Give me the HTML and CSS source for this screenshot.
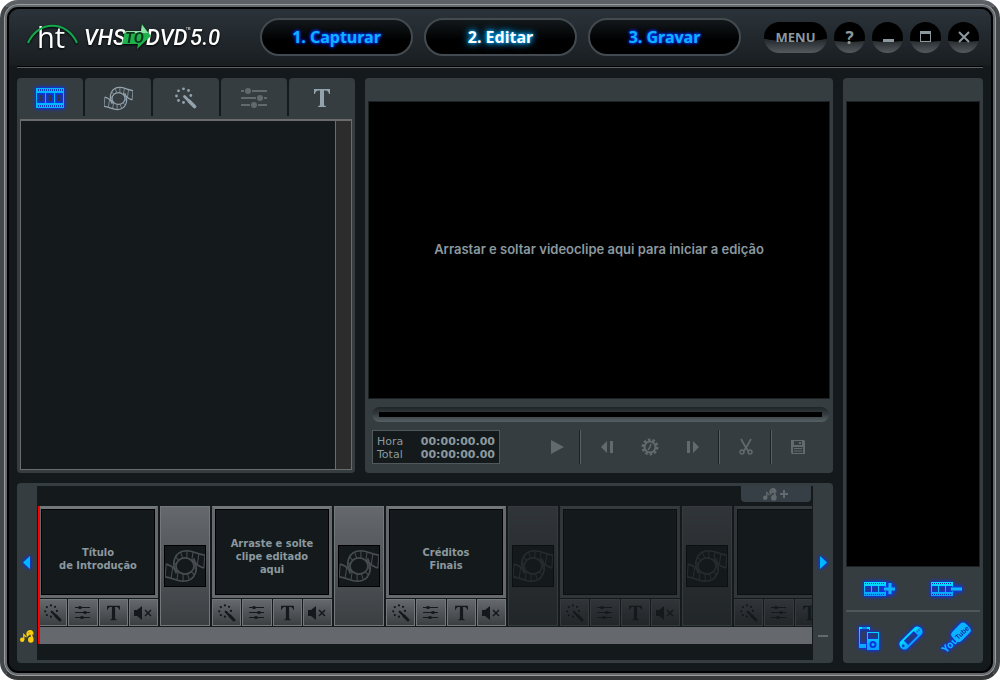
FILE: index.html
```html
<!DOCTYPE html>
<html lang="pt">
<head>
<meta charset="utf-8">
<title>VHS to DVD 5.0</title>
<link rel="stylesheet" href="styles.css">
</head>
<body>
<svg class="defs" aria-hidden="true">
  <linearGradient id="sky" x1="0" y1="0" x2="0" y2="1"><stop offset="0" stop-color="#00e4ff"/><stop offset="1" stop-color="#0a9cff"/></linearGradient>
  <symbol id="film" viewBox="0 0 28 20">
    <path fill="currentColor" fill-rule="evenodd" d="M0 0H28V20H0ZM1 5V15H9V5ZM10 5V15H18V5ZM19 5V15H27V5Z"/>
    <path class="holes" stroke-width="2" stroke-dasharray="1 1" d="M2 2H27M2 18H27"/>
    <path class="dim" stroke-width="3" d="M5 7V13M14 7V13M23 7V13"/>
  </symbol>
  <symbol id="reel" viewBox="0 0 42 42">
    <g fill="none" stroke="currentColor" stroke-width="1.8">
      <ellipse cx="21" cy="21" rx="9.5" ry="8.5"/>
      <g id="arm">
        <path d="M12 29C6 18 10 5 23 5C30 5 34 9 42 9.500M28 14.500C32 18 35 22 41 23"/>
        <path stroke-width="1.100" d="M41.800 9.500L40.800 23M9.500 18L12.500 20M11 11.500L14.500 15M16.500 7L18.500 12.500M23 5V12.500M29.500 6.500L28 15.500M35.500 8.500L34 19"/>
      </g>
      <use href="#arm" transform="rotate(180 21 21)"/>
    </g>
  </symbol>
  <symbol id="wand" viewBox="0 0 22 22">
    <path stroke="currentColor" stroke-width="3.600" stroke-linecap="round" d="M14.500 14.500L19.500 19.500"/>
    <path stroke="currentColor" stroke-width="2.800" stroke-linecap="round" d="M9.500 9.500L15 15"/>
    <g fill="currentColor"><circle cx="8.500" cy="1.800" r="1.400"/><circle cx="13.500" cy="3.500" r="1.400"/><circle cx="3.500" cy="3.800" r="1.400"/><circle cx="1.500" cy="9" r="1.400"/><circle cx="15.800" cy="8.500" r="1.400"/><circle cx="3.500" cy="13.500" r="1.400"/><circle cx="8.500" cy="15.500" r="1.400"/></g>
  </symbol>
  <symbol id="sliders" viewBox="0 0 26 20">
    <path stroke="currentColor" stroke-width="2" d="M0 3H26M0 10H26M0 17H26"/>
    <path class="gap" stroke-width="3" d="M3 3H11M15 10H23M9 17H17"/>
    <g fill="currentColor"><circle cx="7" cy="3" r="3"/><circle cx="19" cy="10" r="3"/><circle cx="13" cy="17" r="3"/></g>
  </symbol>
  <symbol id="mini-sliders" viewBox="0 0 15 13">
    <path stroke="currentColor" d="M0 1.500H15M0 6.500H15M0 11.500H15"/>
    <g fill="currentColor"><ellipse cx="5" cy="1.500" rx="2" ry="1.500"/><ellipse cx="10" cy="6.500" rx="2" ry="1.500"/><ellipse cx="7" cy="11.500" rx="2" ry="1.500"/></g>
  </symbol>
  <symbol id="mute" viewBox="0 0 18 14">
    <path fill="currentColor" d="M0 4H3L8 0V14L3 10H0Z"/>
    <path stroke="currentColor" stroke-width="1.500" d="M11 4L17 10M17 4L11 10"/>
  </symbol>
  <symbol id="notes" viewBox="0 0 14 13">
    <g fill="currentColor"><circle cx="2.200" cy="9.800" r="2.200"/><path d="M3.200 9.500V3L7 7L6 7.500L4.400 6V9.500Z"/><ellipse cx="10.800" cy="9.800" rx="2.800" ry="3"/></g>
    <path fill="none" stroke="currentColor" stroke-width="1.800" d="M12.700 9L10.500 2.500L7.500 5.500C6.500 3 8 0.900 10 0.900C12 0.900 13 2.500 12.500 4.500"/>
  </symbol>
  <symbol id="tools-t" viewBox="0 0 18 20">
    <path fill="currentColor" d="M1 1H17V6H16C15.500 3 14 2.500 11 2.500V16C11 18 12 18 13 18.200V19H5V18.200C6 18 7 18 7 16V2.500C4 2.500 2.500 3 2 6H1Z"/>
  </symbol>
</svg>

<div class="window">
  <header class="titlebar">
    <svg class="logo" viewBox="0 0 198 34" role="img" aria-label="ht VHS to DVD 5.0">
      <text class="logo-ht" x="10" y="28">ht</text>
      <path d="M1 23C11 0 40 0 50 23" fill="none" stroke="#12a84b" stroke-width="2"/>
      <text class="logo-name" x="57" y="25">VHS</text>
      <text class="logo-name" x="119" y="25">DVD</text>
      <path d="M98 11H114L115 4L124 16L110 29L111 24H95Z" fill="#1fb14c"/>
      <path d="M99 11H114L115 5L121 13H98Z" fill="#8fe0a4"/>
      <text class="logo-to" x="98" y="23">TO</text>
      <text class="logo-tm" x="159" y="10">TM</text>
      <text class="logo-name" x="163" y="25">5.0</text>
    </svg>
    <nav class="steps">
      <button class="step">1. Capturar</button>
      <button class="step active">2. Editar</button>
      <button class="step">3. Gravar</button>
    </nav>
    <div class="system">
      <button class="sys menu">MENU</button>
      <button class="sys help" aria-label="Ajuda">?</button>
      <button class="sys" aria-label="Minimizar"><svg width="12" height="14"><path fill="#8b999f" d="M1 9H12V12H1Z"/></svg></button>
      <button class="sys" aria-label="Maximizar"><svg width="12" height="12"><path fill="#8b999f" fill-rule="evenodd" d="M0 0H11V11H0ZM1 3V10H10V3Z"/></svg></button>
      <button class="sys" aria-label="Fechar"><svg width="12" height="12"><path stroke="#8b999f" stroke-width="2" d="M1 1L11 11M11 1L1 11"/></svg></button>
    </div>
  </header>

  <main class="workspace">
    <section class="panel library">
      <div class="tabs">
        <button class="tab lit" aria-label="Vídeos"><svg width="28" height="20"><use href="#film"/></svg></button>
        <button class="tab" aria-label="Transições"><svg width="29" height="29"><use href="#reel"/></svg></button>
        <button class="tab" aria-label="Efeitos"><svg width="22" height="22"><use href="#wand"/></svg></button>
        <button class="tab off" aria-label="Ajustes"><svg width="26" height="20"><use href="#sliders"/></svg></button>
        <button class="tab" aria-label="Texto"><svg width="18" height="20"><use href="#tools-t"/></svg></button>
      </div>
      <div class="bin"><div class="scrollbar"></div></div>
    </section>

    <section class="panel preview">
      <div class="screen">Arrastar e soltar videoclipe aqui para iniciar a edição</div>
      <div class="seek"><div class="seek-track"></div></div>
      <div class="controls">
        <dl class="time">
          <dt>Hora</dt><dd>00:00:00.00</dd>
          <dt>Total</dt><dd>00:00:00.00</dd>
        </dl>
        <div class="group play"><button class="ctl" aria-label="Reproduzir"><svg width="14" height="14"><path fill="#63696c" d="M1 0L14 7L1 14Z"/></svg></button></div>
        <div class="group steps3">
          <button class="ctl" aria-label="Quadro anterior"><svg width="14" height="14"><path fill="#63696c" d="M7 1V13L1 7ZM10 1H13V13H10Z"/></svg></button>
          <button class="ctl" aria-label="Configurações"><svg width="18" height="18" viewBox="-9 -9 18 18"><circle r="5.500" fill="none" stroke="#63696c" stroke-width="2"/><circle r="7.200" fill="none" stroke="#63696c" stroke-width="2.600" stroke-dasharray="2.520 2" /><path d="M1 -3L0 0L-2 3" fill="none" stroke="#63696c" stroke-width="1.500"/></svg></button>
          <button class="ctl" aria-label="Próximo quadro"><svg width="14" height="14"><path fill="#63696c" d="M7 1V13L13 7ZM1 1H4V13H1Z"/></svg></button>
        </div>
        <div class="group single"><button class="ctl" aria-label="Cortar"><svg width="14" height="16" fill="none" stroke="#63696c"><path stroke-width="1.700" d="M2 0L6.500 8L10 13M12 0L7.500 8L4 13"/><circle cx="3" cy="13" r="2" stroke-width="1.400"/><circle cx="11" cy="13" r="2" stroke-width="1.400"/></svg></button></div>
        <div class="group single"><button class="ctl" aria-label="Salvar"><svg width="14" height="14"><path fill="#63696c" fill-rule="evenodd" d="M0 0H13L14 1V14H1L0 13ZM3 1V5H11V1ZM2 7V13H12V7ZM8 2H10V4H8ZM3 8H11V9H3ZM3 10.500H11V11.500H3Z"/></svg></button></div>
      </div>
    </section>

    <aside class="panel output">
      <div class="queue"></div>
      <div class="row clips-row">
        <button class="glow" aria-label="Adicionar clipe"><svg width="34" height="16"><path fill="url(#sky)" fill-rule="evenodd" d="M1 1H23V15H1ZM2 5V11H8V5ZM9 5V11H15V5ZM16 5V11H22V5Z"/><path stroke="#12339f" stroke-dasharray="1 1" d="M2 2.500H22M2 13.500H22"/><path stroke="#1444bb" stroke-width="5" d="M20 8H32M27 2V14"/><path stroke="#0cb4ff" stroke-width="3" d="M21 8H32M27 2V13"/></svg></button>
        <button class="glow" aria-label="Remover clipe"><svg width="34" height="16"><path fill="url(#sky)" fill-rule="evenodd" d="M1 1H23V15H1ZM2 5V11H8V5ZM9 5V11H15V5ZM16 5V11H22V5Z"/><path stroke="#12339f" stroke-dasharray="1 1" d="M2 2.500H22M2 13.500H22"/><path stroke="#1444bb" stroke-width="5" d="M20 8H32"/><path stroke="#0cb4ff" stroke-width="3" d="M21 8H32"/></svg></button>
      </div>
      <div class="row export-row">
        <button class="glow" aria-label="Dispositivos Apple"><svg width="22" height="24"><path fill="url(#sky)" fill-rule="evenodd" d="M1 1H12V4H11V3H2V18H8V22H1ZM9 6H21V24H9ZM10 7V13H20V7ZM15 15A3.500 3.500 0 1 0 15 22A3.500 3.500 0 1 0 15 15Z"/><circle cx="15" cy="18.500" r="1.500" fill="#0cb4ff"/><path stroke="#1444bb" d="M4 2H9"/></svg></button>
        <button class="glow" aria-label="Console portátil"><svg width="26" height="26"><g transform="rotate(-45 13 13)"><path fill="url(#sky)" fill-rule="evenodd" d="M3 8H23A4 5 0 0 1 23 18H3A4 5 0 0 1 3 8ZM6 10V16H20V10Z"/><circle cx="2" cy="13" r="1.500" fill="#1444bb"/><path stroke="#1444bb" stroke-dasharray="1 1" stroke-width="2" d="M21.500 13H26"/></g></svg></button>
        <button class="glow" aria-label="YouTube"><svg width="30" height="28"><g transform="rotate(-45 15 14)"><rect x="13" y="7" width="19" height="13" rx="4" fill="#0cb4ff"/><text class="yt-you" x="-3" y="18">You</text><text class="yt-tube" x="15" y="17">Tube</text></g></svg></button>
      </div>
    </aside>

    <section class="panel timeline">
      <div class="rail">
        <button class="glow arrow" aria-label="Rolar para a esquerda"><svg width="8" height="13"><path fill="#00b8ff" d="M7 0V13L0 6.500Z"/></svg></button>
        <svg class="gold" width="14" height="13"><use href="#notes"/></svg>
      </div>
      <div class="track">
        <button class="add-audio" aria-label="Adicionar áudio"><svg width="14" height="13"><use href="#notes"/></svg><svg width="10" height="10"><path stroke="currentColor" stroke-width="2" d="M5 1V9M1 5H9"/></svg></button>
        <div class="strip">
          <article class="clip"><div class="thumb">Título<br>de Introdução</div><div class="tools"><button aria-label="Efeitos"><svg width="18" height="18"><use href="#wand"/></svg></button><button aria-label="Ajustes"><svg width="15" height="13"><use href="#mini-sliders"/></svg></button><button aria-label="Texto"><svg width="15" height="16"><use href="#tools-t"/></svg></button><button aria-label="Mudo"><svg width="18" height="14"><use href="#mute"/></svg></button></div></article>
          <button class="transition" aria-label="Transição"><svg width="42" height="42"><use href="#reel"/></svg></button>
          <article class="clip"><div class="thumb tall">Arraste e solte<br>clipe editado<br>aqui</div><div class="tools"><button aria-label="Efeitos"><svg width="18" height="18"><use href="#wand"/></svg></button><button aria-label="Ajustes"><svg width="15" height="13"><use href="#mini-sliders"/></svg></button><button aria-label="Texto"><svg width="15" height="16"><use href="#tools-t"/></svg></button><button aria-label="Mudo"><svg width="18" height="14"><use href="#mute"/></svg></button></div></article>
          <button class="transition" aria-label="Transição"><svg width="42" height="42"><use href="#reel"/></svg></button>
          <article class="clip"><div class="thumb">Créditos<br>Finais</div><div class="tools"><button aria-label="Efeitos"><svg width="18" height="18"><use href="#wand"/></svg></button><button aria-label="Ajustes"><svg width="15" height="13"><use href="#mini-sliders"/></svg></button><button aria-label="Texto"><svg width="15" height="16"><use href="#tools-t"/></svg></button><button aria-label="Mudo"><svg width="18" height="14"><use href="#mute"/></svg></button></div></article>
          <button class="transition faded" aria-label="Transição"><svg width="42" height="42"><use href="#reel"/></svg></button>
          <article class="clip faded"><div class="thumb"></div><div class="tools"><button aria-label="Efeitos"><svg width="18" height="18"><use href="#wand"/></svg></button><button aria-label="Ajustes"><svg width="15" height="13"><use href="#mini-sliders"/></svg></button><button aria-label="Texto"><svg width="15" height="16"><use href="#tools-t"/></svg></button><button aria-label="Mudo"><svg width="18" height="14"><use href="#mute"/></svg></button></div></article>
          <button class="transition faded" aria-label="Transição"><svg width="42" height="42"><use href="#reel"/></svg></button>
          <article class="clip faded"><div class="thumb"></div><div class="tools"><button aria-label="Efeitos"><svg width="18" height="18"><use href="#wand"/></svg></button><button aria-label="Ajustes"><svg width="15" height="13"><use href="#mini-sliders"/></svg></button><button aria-label="Texto"><svg width="15" height="16"><use href="#tools-t"/></svg></button><button aria-label="Mudo"><svg width="18" height="14"><use href="#mute"/></svg></button></div></article>
        </div>
        <div class="audio"></div>
        <div class="playhead"></div>
      </div>
      <div class="rail">
        <button class="glow arrow" aria-label="Rolar para a direita"><svg width="8" height="13"><path fill="#00b8ff" d="M1 0V13L8 6.500Z"/></svg></button>
        <svg class="minus" width="10" height="13"><path stroke="#63696c" stroke-width="2" d="M0 6H10"/></svg>
      </div>
    </section>
  </main>
</div>
</body>
</html>
```
FILE: styles.css
```css
* { box-sizing: border-box; }
body { margin: 0; background: #fff; font-family: "DejaVu Sans Condensed", "DejaVu Sans", sans-serif; color: #8b999f; }
button { margin: 0; padding: 0; border: 0; background: none; color: inherit; font: inherit; }
svg { display: block; overflow: visible; }
.defs { position: absolute; width: 0; height: 0; }

.window {
  display: flex;
  flex-direction: column;
  height: 100vh;
  border: 4px solid #5d6165;
  border-color: #5d6165 #43474a #343638 #43474a;
  border-radius: 18px;
  padding: 5px;
  background: #14191c;
  box-shadow: inset 0 0 0 1px #9a9ea1, inset 0 0 0 3px #65696d, inset 0 0 0 5px #000;
}

.titlebar {
  display: flex;
  align-items: center;
  margin: 0 8px;
  padding: 0 4px 2px 10px;
  height: 59px;
  flex: none;
  border-bottom: 1px solid #596064;
  box-shadow: inset 0 -1px 0 #000;
  position: relative;
}
.window::before {
  content: "";
  position: absolute;
  inset: 9px 9px auto 9px;
  height: 57px;
  border-radius: 10px 10px 0 0;
  background: linear-gradient(#2b333a, #181d20);
}
.logo { width: 198px; height: 34px; flex: none; filter: drop-shadow(0 1px 1px #000); }
.logo text { fill: #fff; }
.logo-ht { font: 29px "Open Sans", sans-serif; }
.logo-name { font: italic 500 22px Roboto, sans-serif; }
.logo .logo-to { font: italic 700 15px Roboto, sans-serif; fill: #06351a; }
.logo-tm { font: 3px Roboto, sans-serif; }

.steps { display: flex; gap: 11px; margin-left: 35px; }
.step {
  width: 153px;
  height: 38px;
  border: 2px solid #434b50;
  border-radius: 19px;
  background: linear-gradient(#13181b, #000 60%);
  color: #0cb4ff;
  font: 700 16px/34px "Noto Sans", sans-serif;
  text-shadow: 0 0 2px #0433ff, 0 0 3px #0433ff, 0 0 4px #0433ff;
}
.step.active { color: #fff; text-shadow: 0 0 3px #00a8ff, 0 0 6px #00a8ff, 0 0 10px #00a8ff; }

.system { display: flex; gap: 7px; margin-left: auto; }
.sys {
  display: flex;
  align-items: center;
  justify-content: center;
  width: 31px;
  height: 31px;
  border-radius: 16px;
  background: radial-gradient(ellipse 60px 20px at 50% 0, #000 97%, transparent 100%), linear-gradient(#22272a 55%, #545a5e);
  color: #8b999f;
}
.menu { width: 63px; font: 700 13px/31px "Noto Sans", sans-serif; }
.help { font: 700 17px/31px "Noto Sans", sans-serif; }

.workspace {
  flex: 1;
  min-height: 0;
  display: grid;
  grid-template-columns: minmax(0, 338fr) minmax(0, 468fr) 140px;
  grid-template-rows: minmax(0, 1fr) 180px;
  gap: 10px;
  padding: 10px 8px 8px;
}
.panel { background: #363d40; border-radius: 4px; min-width: 0; }

.library { display: flex; flex-direction: column; padding-bottom: 3px; overflow: hidden; }
.tabs { display: grid; grid-template-columns: repeat(5, 1fr); gap: 2px; height: 38px; background: #14191c; }
.tab { display: flex; align-items: center; justify-content: center; padding-top: 2px; border-radius: 4px 4px 0 0; background: #363d40; color: #92a3ad; }
.tab.off { color: #63696c; }
.tab.lit { color: #00b8ff; }
.tab.lit svg { filter: drop-shadow(0 0 1px #0433ff) drop-shadow(0 0 2px #0433ff); }
.holes { stroke: #1444bb; }
.dim { stroke: #2d3a44; }
.gap { stroke: #363d40; }
.bin { flex: 1; display: flex; justify-content: flex-end; margin: 3px 3px 0; border: 1px solid #6b6b6b; border-top-width: 2px; background: #14191c; }
.scrollbar { width: 16px; border-left: 1px solid #6b6b6b; background: #2c2c2c; }

.preview { display: flex; flex-direction: column; padding: 23px 3px 9px; }
.screen {
  flex: 1;
  display: flex;
  align-items: center;
  justify-content: center;
  padding-bottom: 2px;
  border: 1px solid #1c2224;
  background: #000;
  font: 600 13px/16px Inter, "Liberation Sans", sans-serif;
}
.seek { margin: 8px 1px 0 4px; height: 15px; padding: 5px 7px; border-radius: 8px; background: linear-gradient(#1f2527, #363d40 50%, #566165); }
.seek-track { height: 5px; background: #000; }
.controls { display: flex; align-items: center; margin: 8px 7px 0 4px; height: 34px; }
.time {
  display: grid;
  grid-template-columns: 1fr auto;
  align-content: center;
  width: 128px;
  height: 34px;
  margin: 0 auto 0 0;
  padding: 1px 4px 0;
  border: 1px solid #50585b;
  background: #14191c;
  font: 11px/13px "DejaVu Sans", sans-serif;
}
.time dd { margin: 0; font-weight: 700; }
.group { display: flex; align-items: center; justify-content: center; height: 34px; }
.group + .group { border-left: 1px solid #596064; box-shadow: -1px 0 0 #1c2224; }
.single { width: 52px; }
.play { width: 46px; }
.steps3 { width: 139px; }
.ctl { display: flex; justify-content: center; width: 43px; }

.output { grid-column: 3; grid-row: 1 / 3; display: flex; flex-direction: column; padding: 23px 3px 0; }
.queue { flex: 1; border: 1px solid #1c2224; background: #000; }
.row { display: flex; align-items: center; }
.clips-row { justify-content: space-around; height: 45px; border-bottom: 2px solid #4f5659; }
.export-row { justify-content: space-between; height: 51px; padding: 0 9px 0 12px; }
.glow { filter: drop-shadow(0 0 1px #0433ff) drop-shadow(0 0 2px #0433ff); }
.yt-you { font: 700 10px "DejaVu Sans Condensed", sans-serif; fill: #0cb4ff; }
.yt-tube { font: 700 7px "Liberation Sans", sans-serif; fill: #0a2a9a; }

.timeline { grid-column: 1 / 3; grid-row: 2; display: flex; padding: 3px 0; }
.rail { width: 20px; flex: none; display: grid; grid-template-rows: 1fr 24px; justify-items: center; padding-bottom: 12px; }
.arrow { align-self: end; margin-bottom: 55px; }
.gold { color: #ffce0a; align-self: center; }
.minus { align-self: center; }
.track { position: relative; flex: 1; min-width: 0; padding: 20px 1px 0; background: #14191c; overflow: hidden; }
.add-audio {
  position: absolute;
  top: 0;
  right: 2px;
  display: flex;
  align-items: center;
  justify-content: center;
  gap: 2px;
  width: 70px;
  height: 16px;
  border-radius: 0 0 4px 4px;
  background: #363f45;
  color: #63696c;
}
.strip { display: flex; gap: 2px; overflow: hidden; }
.clip { flex: none; width: 120px; }
.thumb {
  display: flex;
  align-items: center;
  justify-content: center;
  height: 92px;
  padding-top: 14px;
  border: 3px solid #65696d;
  border-top-color: #72777a;
  box-shadow: inset 0 0 0 1px #000;
  background: #14191c;
  font-weight: 700;
  font-size: 11px;
  line-height: 13px;
  text-align: center;
}
.thumb.tall { padding-top: 8px; }
.tools { display: grid; grid-template-columns: repeat(4, 1fr); gap: 1px; margin-top: 1px; }
.tools button, .transition { border: 1px solid #72777a; background: linear-gradient(#65696d, #3b3f42); color: #14191c; }
.tools button { display: flex; align-items: center; justify-content: center; height: 27px; }
.transition { display: flex; align-items: center; justify-content: center; flex: none; width: 50px; height: 120px; }
.transition svg { border: 1px solid #000; background: #14191c; color: #484d50; overflow: hidden; }
.faded { opacity: 0.35; }
.audio { height: 17px; margin-top: 1px; background: #65696d; }
.playhead { position: absolute; left: 1px; top: 20px; width: 2px; height: 138px; background: #f00; }
```
